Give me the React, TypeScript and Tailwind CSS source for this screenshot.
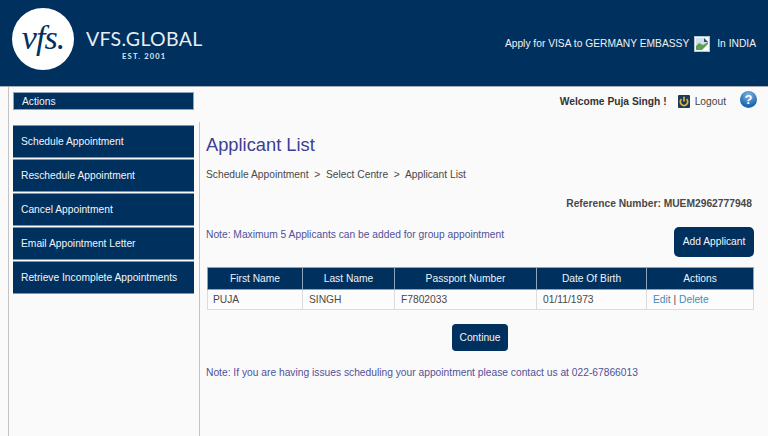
import React from "react";

const menu = [
  "Schedule Appointment",
  "Reschedule Appointment",
  "Cancel Appointment",
  "Email Appointment Letter",
  "Retrieve Incomplete Appointments",
];

function Logo() {
  return (
    <div className="flex items-center">
      <div className="w-[62px] h-[62px] rounded-full bg-white flex items-center justify-center">
        <span className="font-['Liberation_Serif',serif] italic text-[34px] leading-none text-[#00305e] tracking-[-1px] -mt-[2px]">vfs.</span>
      </div>
      <div className="ml-[12px] flex flex-col items-center pt-[12px]">
        <span className="text-[19.5px] leading-[22px] text-[#e8edf2] font-['Lato',sans-serif] tracking-[0.3px]">VFS.GLOBAL</span>
        <span className="text-[7.5px] leading-[10px] mt-[2px] text-[#dfe6ee] font-bold font-['Lato',sans-serif] tracking-[1.2px]">EST. 2001</span>
      </div>
    </div>
  );
}

function BrokenImage() {
  return (
    <svg width="16" height="16" viewBox="0 0 16 16" className="mx-[5px]">
      <rect x="0.5" y="0.5" width="15" height="15" fill="#f2f6f8" stroke="#b9c3cc" />
      <path d="M2 2h8l4 4v8H2z" fill="#cfe0ee" />
      <path d="M2 10l3-3 4 2 5-3v8H2z" fill="#5fa050" />
      <path d="M8 14l6-6v6z" fill="#ffffff" />
      <path d="M10 2l4 4h-4z" fill="#2e4a66" />
    </svg>
  );
}

function PowerIcon() {
  return (
    <svg width="12" height="13" viewBox="0 0 12 13">
      <rect width="12" height="13" rx="1" fill="#1c3a5c" />
      <path d="M3.4 4.2a3.7 3.7 0 1 0 5.2 0" fill="none" stroke="#e3b531" strokeWidth="1.7" />
      <path d="M6 1.8v4.6" stroke="#e3b531" strokeWidth="1.7" />
    </svg>
  );
}

function HelpIcon() {
  return (
    <div className="w-[17px] h-[17px] rounded-full bg-[radial-gradient(circle_at_50%_25%,#7fb5e6,#1d66ad_70%)] flex items-center justify-center text-white font-bold text-[13px] leading-none font-['Liberation_Sans',sans-serif]">
      ?
    </div>
  );
}

export default function App() {
  const headers = [
    ["First Name", "w-[95px]"],
    ["Last Name", "w-[92px]"],
    ["Passport Number", "w-[142px]"],
    ["Date Of Birth", "w-[110px]"],
    ["Actions", "w-[107px]"],
  ];
  return (
    <div className="w-[768px] h-[436px] overflow-hidden bg-[#fbfafb] font-['Liberation_Sans',Arial,sans-serif] text-[10.25px] text-[#444]">
      <header className="h-[87px] bg-[#00305e] border-b border-[#a9adb3] flex items-start justify-between pl-[12px] pr-[12px] pt-[8px]">
        <Logo />
        <div className="flex items-center mt-[28px] leading-[16px] text-[#eef2f6]">
          <span>Apply for VISA to GERMANY EMBASSY</span>
          <BrokenImage />
          <span className="ml-[2px]">In INDIA</span>
        </div>
      </header>
      <div className="ml-[8px] h-[349px] border-l border-[#c4c4c4] pl-[4px] flex flex-col">
        <div className="flex items-start pt-[5px] h-[35px]">
          <div className="w-[181px] h-[18px] bg-[#00305e] border border-[#8fa3bb] text-[#eef2f6] leading-[18px] pl-[8px]">
            Actions
          </div>
          <div className="flex-1 flex items-center justify-end pr-[11px] pt-[2px]">
            <span className="font-bold text-[#333]">Welcome Puja Singh !</span>
            <span className="ml-[11px] flex"><PowerIcon /></span>
            <span className="ml-[5px] text-[#444]">Logout</span>
            <span className="ml-[14px] -mt-[5px]"><HelpIcon /></span>
          </div>
        </div>
        <div className="flex flex-1 min-h-0">
          <nav className="w-[181px] flex flex-col gap-[1px] pt-[3px] shrink-0">
            {menu.map((m) => (
              <div key={m} className="h-[33px] bg-[#00305e] border-y border-[#7d93ad] pl-[8px] flex items-center text-[#f2f5f8]">
                {m}
              </div>
            ))}
          </nav>
          <main className="ml-[5px] flex-1 border-l border-[#c4c4c4] pl-[6px] pr-[14px] min-w-0">
            <h1 className="text-[18.3px] leading-[24px] mt-[11px] text-[#3c3f93]">Applicant List</h1>
            <div className="mt-[11px] leading-[14px] text-[#484848] whitespace-pre">Schedule Appointment  {">"}  Select Centre  {">"}  Applicant List</div>
            <div className="mt-[15px] text-right leading-[14px] font-bold text-[#484848] pr-[2px]">Reference Number: MUEM2962777948</div>
            <div className="mt-[16px] flex justify-between items-start">
              <div className="mt-[1px] leading-[14px] text-[#4f5198]">Note: Maximum 5 Applicants can be added for group appointment</div>
              <button className="h-[30px] w-[80px] rounded-[5px] bg-[#00305e] text-[#f2f5f8]">Add Applicant</button>
            </div>
            <table className="mt-[10px] ml-[1px] w-[546px] table-fixed border-collapse">
              <thead>
                <tr className="h-[22px] bg-[#00305e] text-[#eef2f6]">
                  {headers.map(([h, w]) => (
                    <th key={h} className={`${w} border border-[#8fa3bb] font-normal p-0`}>{h}</th>
                  ))}
                </tr>
              </thead>
              <tbody>
                <tr className="h-[20px] text-[#484848] bg-white/40">
                  <td className="border border-[#dcdcdc] pl-[5px] p-0">PUJA</td>
                  <td className="border border-[#dcdcdc] pl-[6px] p-0">SINGH</td>
                  <td className="border border-[#dcdcdc] pl-[6px] p-0">F7802033</td>
                  <td className="border border-[#dcdcdc] pl-[6px] p-0">01/11/1973</td>
                  <td className="border border-[#dcdcdc] pl-[6px] p-0"><span className="text-[#4a8ab8]">Edit</span> | <span className="text-[#4a8ab8]">Delete</span></td>
                </tr>
              </tbody>
            </table>
            <div className="mt-[14px] flex justify-center">
              <button className="h-[27px] w-[56px] rounded-[4px] bg-[#00305e] text-[#f2f5f8]">Continue</button>
            </div>
            <div className="mt-[15px] leading-[14px] text-[#4f5198]">Note: If you are having issues scheduling your appointment please contact us at 022-67866013</div>
          </main>
        </div>
      </div>
    </div>
  );
}
